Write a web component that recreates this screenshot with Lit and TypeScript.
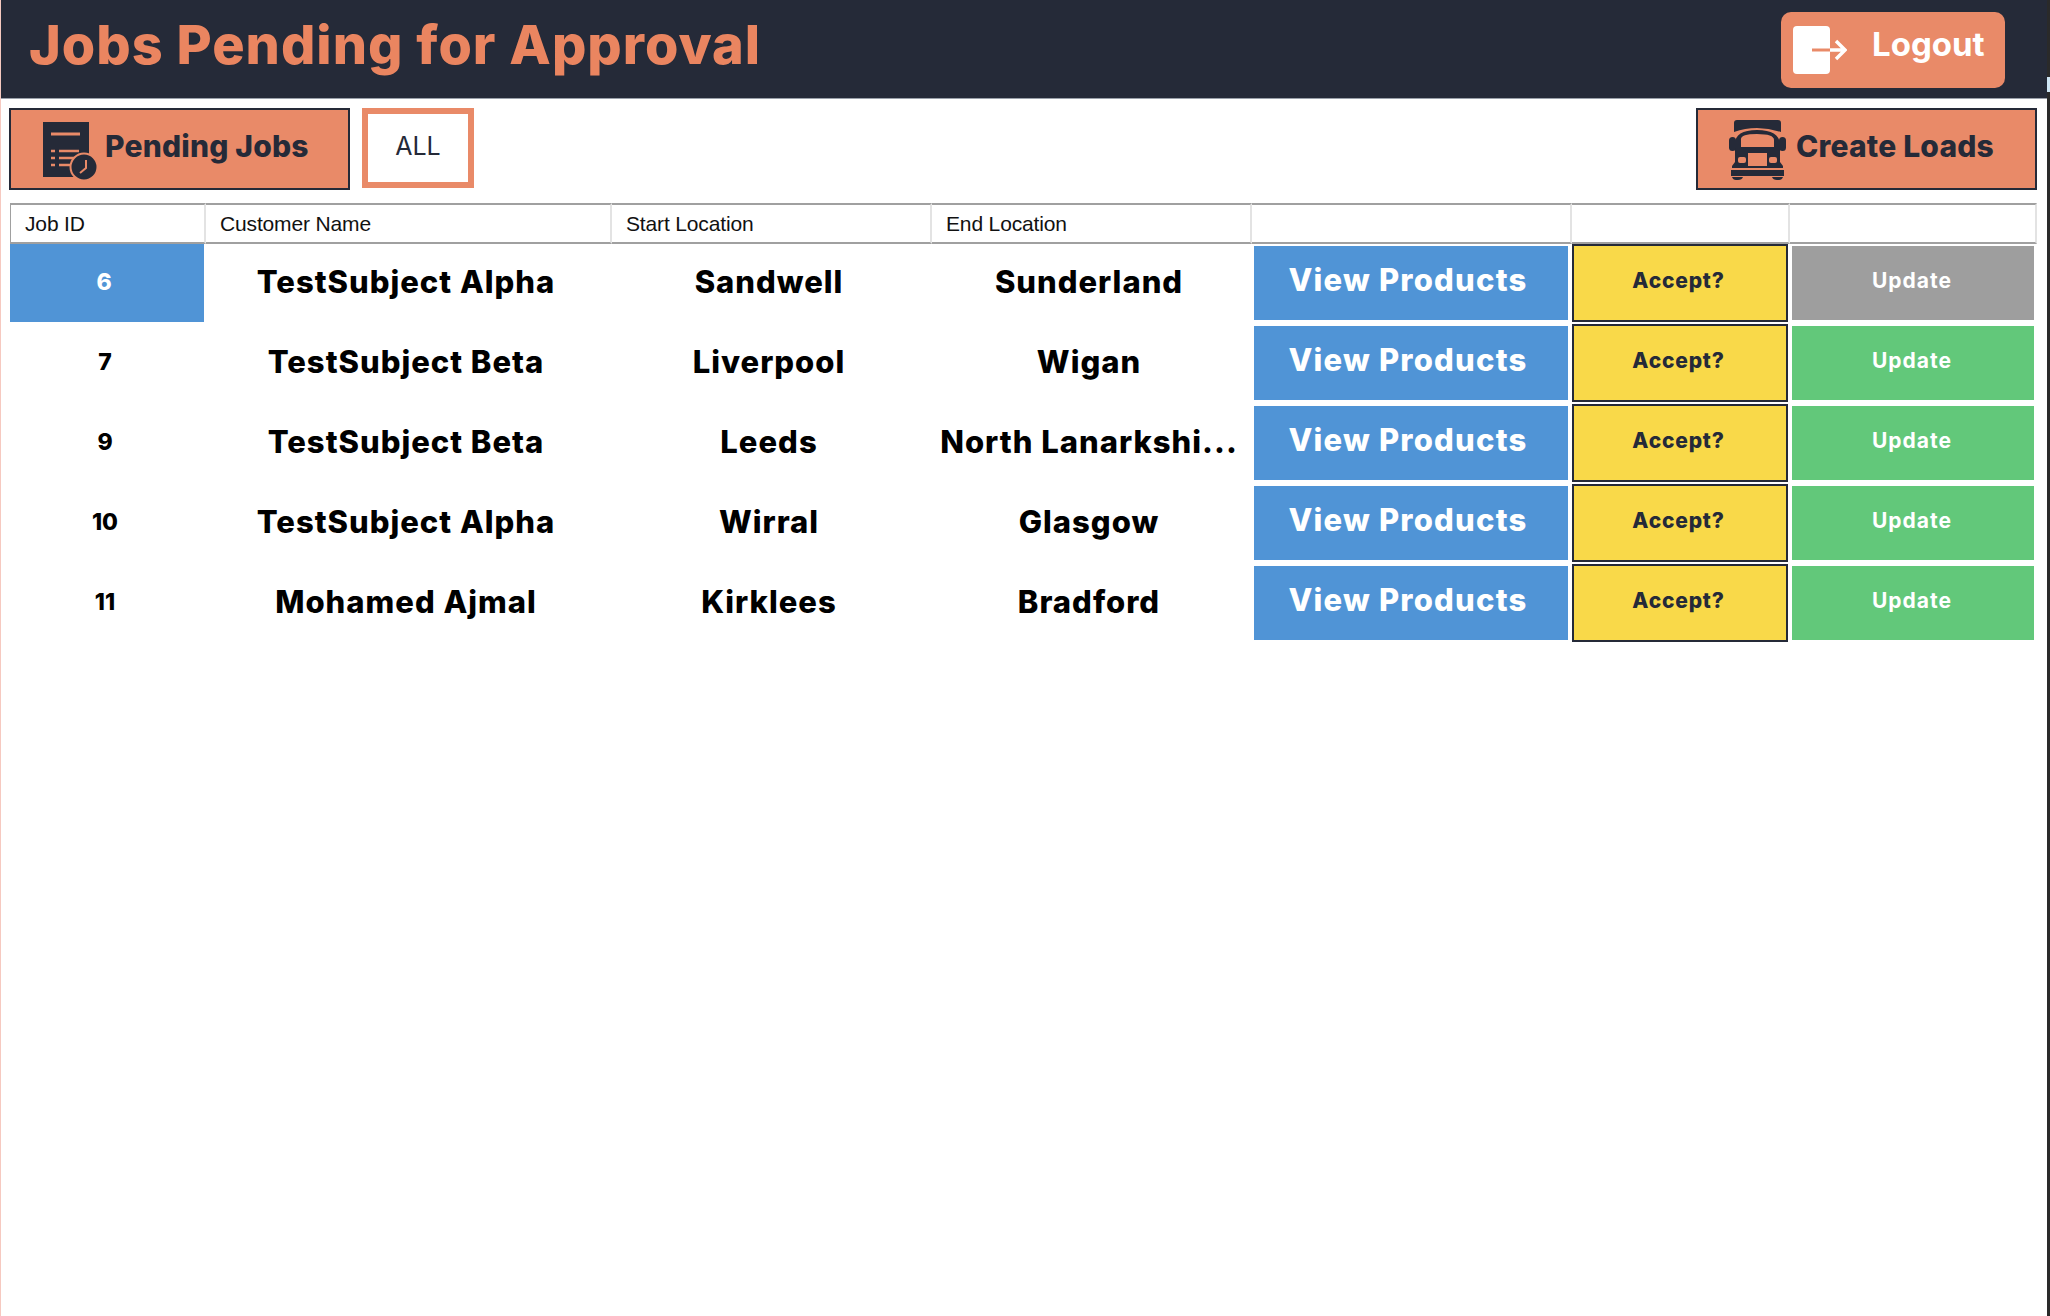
import { LitElement, html, css } from "lit";
import { customElement } from "lit/decorators.js";

const jobs = [
  { id: 6, customer: "TestSubject Alpha", start: "Sandwell", end: "Sunderland" },
  { id: 7, customer: "TestSubject Beta", start: "Liverpool", end: "Wigan" },
  { id: 9, customer: "TestSubject Beta", start: "Leeds", end: "North Lanarkshi..." },
  { id: 10, customer: "TestSubject Alpha", start: "Wirral", end: "Glasgow" },
  { id: 11, customer: "Mohamed Ajmal", start: "Kirklees", end: "Bradford" },
];

const logoutIcon = html`<svg class="logout-icon" width="54" height="48" viewBox="0 0 54 48">
  <rect x="0" y="0" width="37" height="48" rx="4" fill="#fff"></rect>
  <path d="M19 24H37" stroke="#e98a68" stroke-width="3" fill="none"></path>
  <path d="M37 24H51M43 15L52 24L43 33" stroke="#fff" stroke-width="3.4" fill="none"></path>
</svg>`;

const docIcon = html`<svg class="btn-icon doc-icon" width="54" height="58" viewBox="0 0 54 58">
  <rect x="0" y="0" width="46" height="55" fill="#252a38"></rect>
  <path d="M8 12H37" stroke="#e98a68" stroke-width="3" fill="none"></path>
  <path d="M8 29H12M16 29H36M8 36H12M16 36H34M8 43H12M16 43H28" stroke="#e98a68" stroke-width="2.6" fill="none"></path>
  <circle cx="41" cy="45" r="13.5" fill="#252a38" stroke="#e98a68" stroke-width="2"></circle>
  <path d="M43 38V46L37 51" stroke="#e98a68" stroke-width="2" fill="none"></path>
</svg>`;

const truckIcon = html`<svg class="btn-icon truck-icon" width="57" height="60" viewBox="0 0 57 60" fill="#252a38">
  <path d="M5 3Q5 0 8 0H49Q52 0 52 3V12Q40 8 28 8T5 12Z"></path>
  <path d="M6 42V24Q6 10 28 10T51 24V42L54 46V48H3V46ZM12 27H45V20Q45 14 28 14T12 20Z" fill-rule="evenodd"></path>
  <rect x="0" y="17" width="7" height="14" rx="3.5"></rect>
  <rect x="50" y="17" width="7" height="14" rx="3.5"></rect>
  <rect x="19" y="33" width="19" height="13" fill="#e98a68"></rect>
  <rect x="9" y="37" width="8" height="6" rx="2" fill="#e98a68"></rect>
  <rect x="40" y="37" width="8" height="6" rx="2" fill="#e98a68"></rect>
  <rect x="2" y="50" width="53" height="6"></rect>
  <path d="M3 57H14Q13 60 9 60H7Q4 60 3 57ZM43 57H54Q53 60 50 60H48Q44 60 43 57Z"></path>
</svg>`;

@customElement("app-root")
export class AppRoot extends LitElement {
  static styles = css`
    :host {
      display: block;
      min-height: 1316px;
      background: #fff;
      border-left: 1px solid #f6c9c0;
      border-right: 3px solid #2a2a2a;
      box-sizing: border-box;
      font-family: Inter, "Noto Sans", sans-serif;
    }

    button {
      font-family: inherit;
      padding: 0;
      margin: 0;
      cursor: pointer;
    }

    .topbar {
      position: relative;
      height: 98px;
      background: #252a38;
      border-bottom: 1px solid #9aa0aa;
      display: flex;
      align-items: center;
      justify-content: space-between;
      padding: 0 42px 0 28px;
    }

    .edge-mark {
      position: absolute;
      top: 77px;
      right: -3px;
      width: 3px;
      height: 15px;
      background: #cfe6f4;
    }

    .title {
      margin: 0 0 9px;
      font-size: 54px;
      font-weight: 800;
      color: #ea8560;
      letter-spacing: 1px;
    }

    .logout {
      width: 224px;
      height: 76px;
      margin-top: 1px;
      display: flex;
      align-items: center;
      gap: 25px;
      padding: 0 0 0 12px;
      background: #e98a68;
      border: none;
      border-radius: 10px;
      color: #fff;
      font-size: 33px;
      font-weight: 700;
    }

    .logout span {
      margin-bottom: 11px;
    }

    .toolbar {
      display: flex;
      align-items: flex-start;
      gap: 12px;
      padding: 9px 10px 0 8px;
      height: 104px;
      box-sizing: border-box;
    }

    .tool-btn {
      height: 82px;
      display: flex;
      align-items: center;
      background: #e98a68;
      border: 2px solid #252a38;
      color: #252a38;
      font-size: 30px;
      font-weight: 800;
      letter-spacing: 0.2px;
      box-sizing: border-box;
    }

    .tool-btn span {
      margin-bottom: 7px;
    }

    .pending {
      width: 341px;
      gap: 8px;
      padding-left: 32px;
    }

    .create {
      width: 341px;
      gap: 10px;
      padding-left: 31px;
      margin-left: auto;
    }

    .btn-icon {
      flex: none;
    }

    .doc-icon {
      margin-top: 3px;
    }

    .truck-icon {
      margin-top: 1px;
    }

    .all {
      width: 112px;
      height: 80px;
      padding-bottom: 4px;
      background: #fff;
      border: 6px solid #e98a68;
      color: #252a38;
      font-size: 25px;
      font-weight: 400;
      box-sizing: border-box;
    }

    .grid {
      margin-left: 9px;
      width: 2027px;
      display: grid;
      grid-template-columns: 196px 406px 320px 320px 320px 218px 247px;
    }

    .head {
      height: 41px;
      box-sizing: border-box;
      border-top: 2px solid #a0a0a0;
      border-bottom: 2px solid #a0a0a0;
      border-right: 2px solid #e3e3e3;
      padding-left: 14px;
      display: flex;
      align-items: center;
      font-family: "Liberation Sans", Arial, sans-serif;
      font-size: 21px;
      letter-spacing: -0.15px;
      color: #111;
    }

    .head:first-child {
      border-left: 1px solid #a0a0a0;
    }

    .head:last-child {
      border-right: 1px solid #d0d0d0;
    }

    .cell {
      height: 80px;
      display: flex;
      align-items: center;
      justify-content: center;
      padding: 0 6px 5px 0;
      box-sizing: border-box;
      font-size: 31px;
      font-weight: 800;
      letter-spacing: 1px;
      color: #000;
    }

    .id {
      font-size: 23px;
      letter-spacing: 0;
    }

    .id-active {
      height: 78px;
      padding-bottom: 3px;
      margin-right: 2px;
      background: #5094d6;
      color: #fff;
    }

    .action {
      border: none;
      box-sizing: border-box;
      color: #fff;
    }

    .view {
      width: 314px;
      height: 74px;
      margin: 2px 0 0 2px;
      padding: 0 6px 8px 0;
      background: #5094d6;
      font-size: 31px;
      font-weight: 800;
      letter-spacing: 1.2px;
    }

    .accept {
      width: 216px;
      height: 78px;
      padding: 0 3px 6px 0;
      background: #f9d949;
      border: 2px solid #252a38;
      color: #252a38;
      font-size: 21px;
      font-weight: 800;
      letter-spacing: 0.8px;
    }

    .update {
      width: 242px;
      height: 74px;
      margin: 2px 0 0 2px;
      padding: 0 2px 5px 0;
      background: #62c87a;
      font-size: 21px;
      font-weight: 700;
      letter-spacing: 1px;
    }

    .update-off {
      background: #9e9e9e;
    }
  `;

  render() {
    return html`
      <header class="topbar">
        <h1 class="title">Jobs Pending for Approval</h1>
        <button class="logout">${logoutIcon}<span>Logout</span></button>
        <div class="edge-mark"></div>
      </header>
      <div class="toolbar">
        <button class="tool-btn pending">${docIcon}<span>Pending Jobs</span></button>
        <button class="all">ALL</button>
        <button class="tool-btn create">${truckIcon}<span>Create Loads</span></button>
      </div>
      <div class="grid">
        <div class="head">Job ID</div>
        <div class="head">Customer Name</div>
        <div class="head">Start Location</div>
        <div class="head">End Location</div>
        <div class="head"></div>
        <div class="head"></div>
        <div class="head"></div>
        ${jobs.map(
          (job, i) => html`
            <div class="cell id ${i === 0 ? "id-active" : ""}">${job.id}</div>
            <div class="cell">${job.customer}</div>
            <div class="cell">${job.start}</div>
            <div class="cell">${job.end}</div>
            <div><button class="action view">View Products</button></div>
            <div><button class="action accept">Accept?</button></div>
            <div><button class="action update ${i === 0 ? "update-off" : ""}">Update</button></div>
          `
        )}
      </div>
    `;
  }
}
